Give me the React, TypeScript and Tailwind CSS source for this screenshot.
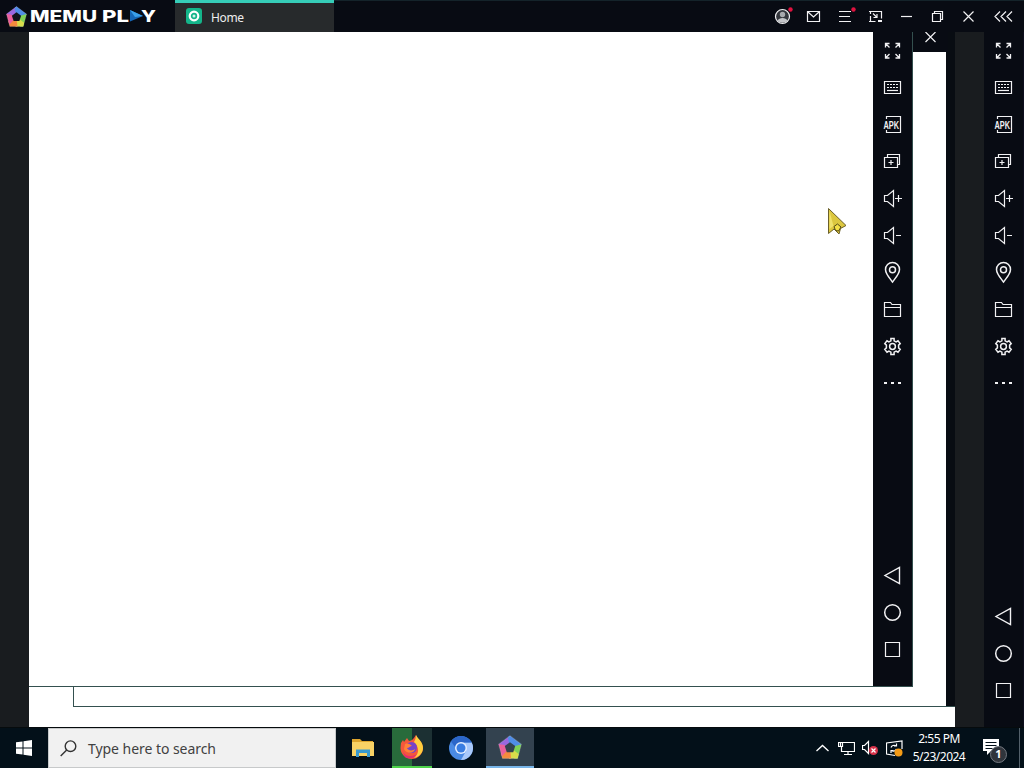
import React from "react";

type IconProps = {
  children: React.ReactNode;
  width?: number;
};

function Icon({ children, width = 1.2 }: IconProps) {
  return (
    <svg
      width="21"
      height="21"
      viewBox="0 0 21 21"
      fill="none"
      stroke="#f1f1f3"
      strokeWidth={width}
      className="shrink-0 overflow-visible"
    >
      {children}
    </svg>
  );
}

const FullscreenIcon = () => (
  <Icon width={1.3}>
    <path d="M3.5 7.5v-4h4M3.5 3.5l4 4M13.5 3.5h4v4M17.5 3.5l-4 4M3.5 14v4h4M3.5 18l4-4M17.5 14v4h-4M17.5 18l-4-4" />
  </Icon>
);

const KeyboardIcon = () => (
  <Icon>
    <path d="M2.5 4.5h16v12h-16z" />
    <path d="M5 7.5h12M5 10.5h12" strokeDasharray="2 1" />
    <path d="M5 13.5h11" />
  </Icon>
);

const ApkIcon = () => (
  <Icon>
    <path d="M4.5 5V2.5h14v16h-14V16" />
    <text
      x="1.5"
      y="14.5"
      fontSize="11"
      fontWeight="700"
      fontFamily="Liberation Sans, sans-serif"
      textLength="15.5"
      lengthAdjust="spacingAndGlyphs"
      fill="#f1f1f3"
      stroke="none"
    >
      APK
    </text>
  </Icon>
);

const MultiIcon = () => (
  <Icon>
    <path d="M2.5 6.5h13v10h-13zM5.5 6.5v-3h12v10h-2M6.5 11.5h5M9 9v5" />
  </Icon>
);

const VolumeUpIcon = () => (
  <Icon>
    <path d="M2.5 7.5h3l6-5v16l-6-5h-3zM13 10.5h7M16.5 7v7" />
  </Icon>
);

const VolumeDownIcon = () => (
  <Icon>
    <path d="M2.5 7.5h3l6-5v16l-6-5h-3zM14 10.5h5" />
  </Icon>
);

const PinIcon = () => (
  <Icon width={1.5}>
    <path d="M10.5 20C8 16.5 3.5 12 3.5 7.5a7 7 0 0 1 14 0C17.5 12 13 16.5 10.5 20z" />
    <circle cx="10.5" cy="7.7" r="3" />
  </Icon>
);

const FolderIcon = () => (
  <Icon>
    <path d="M2.5 17.5v-14h6l1.5 2h8.5v12zM2.5 8.5h16" />
  </Icon>
);

const GearIcon = () => (
  <Icon width={1.5}>
    <path d="M8.9 2.6h3.2v2.2l2 1.1 1.9-1.1 2.2 2.8-1.6 1.5v2.8l1.6 1.5-2.2 2.8-1.9-1.1-2 1.100v2.200H8.900v-2.200l-2-1.100L5 16.200l-2.200-2.800 1.600-1.500V9.100L2.800 7.600 5 4.800l1.900 1.100 2-1.100z" />
    <circle cx="10.5" cy="10.5" r="2.9" />
  </Icon>
);

const MoreIcon = () => (
  <Icon width={2}>
    <path d="M2 10h3M9 10h3M16 10h3" />
  </Icon>
);

const BackIcon = () => (
  <Icon width={1.4}>
    <path d="M17.5 2.5v16L3 10.5z" />
  </Icon>
);

const HomeIcon = () => (
  <Icon width={1.5}>
    <circle cx="10.5" cy="10.5" r="7.8" />
  </Icon>
);

const RecentIcon = () => (
  <Icon>
    <path d="M3.5 3.5h14v14h-14z" />
  </Icon>
);

const tools = [
  FullscreenIcon,
  KeyboardIcon,
  ApkIcon,
  MultiIcon,
  VolumeUpIcon,
  VolumeDownIcon,
  PinIcon,
  FolderIcon,
  GearIcon,
  MoreIcon,
];

const navigation = [BackIcon, HomeIcon, RecentIcon];

function Toolbar() {
  return (
    <aside className="flex w-[39px] shrink-0 flex-col justify-between bg-[#080b13] pb-[18px]">
      <div>
        {tools.map((Tool, i) => (
          <button key={i} className="flex h-[37px] w-full items-center justify-center">
            <Tool />
          </button>
        ))}
      </div>
      <div>
        {navigation.map((Nav, i) => (
          <button key={i} className="flex h-[37px] w-full items-center justify-center">
            <Nav />
          </button>
        ))}
      </div>
    </aside>
  );
}

function Pentagon({ size, hole }: { size: number; hole: string }) {
  return (
    <svg width={size} height={size} viewBox="0 0 24 24">
      <path d="M12 1.500L1.500 9.500 5 15l7-2.500 2-8z" fill="#9a68e0" />
      <path d="M10 3l2-1.500 10.500 8-2.500 5-8-2z" fill="#4f8de6" />
      <path d="M22.500 9.500L19 22.500h-3l-4-10z" fill="#7fd155" />
      <path d="M20 18.500l-1 4h-8l1-10z" fill="#d8dc4a" />
      <path d="M13 22.500H5L3.500 17l8.500-4.500z" fill="#f58a3e" />
      <path d="M4.500 20.500l-3-11L6 10l6 2.500z" fill="#ea5f9c" />
      <path d="M12 1.500l10.500 8L19 22.500H5L1.500 9.500z" fill="none" stroke="#fff" strokeOpacity=".15" strokeLinejoin="round" />
      <path d="M12 7.600l4.800 3.500-1.800 5.700H9l-1.800-5.700z" fill={hole} />
    </svg>
  );
}

function Brand() {
  return (
    <div className="flex w-[175px] items-center pl-[5px]">
      <Pentagon size={23} hole="#10141d" />
      <svg
        width="128"
        height="22"
        viewBox="0 0 128 22"
        className="ml-[2px]"
        fontFamily="Inter, sans-serif"
        fontSize="15.5"
        fontWeight="800"
        fill="#fff"
      >
        <text x="0" y="16.5" textLength="67" lengthAdjust="spacingAndGlyphs">
          MEMU
        </text>
        <text x="72" y="16.5" textLength="27" lengthAdjust="spacingAndGlyphs">
          PL
        </text>
        <path d="M100 5l13 6-13 5.500z" fill="#1668b8" />
        <path d="M100 5l13 6-8 1z" fill="#3aa0ea" />
        <text x="111" y="16.5" textLength="15" lengthAdjust="spacingAndGlyphs">
          Y
        </text>
      </svg>
    </div>
  );
}

function HomeTab() {
  return (
    <div className="flex w-[159px] items-start border-t-[3px] border-[#36cdb8] bg-[#272a2c] pt-[5px] pl-[11px]">
      <svg width="16" height="16" viewBox="0 0 16 16">
        <rect width="16" height="16" rx="3" fill="#14b58a" />
        <circle cx="8" cy="8" r="4.3" fill="none" stroke="#fff" strokeWidth="2.2" />
        <circle cx="8" cy="8" r="1.5" fill="#d5f5ea" />
      </svg>
      <span className="ml-[9px] text-[12px] leading-[19px] tracking-[-0.35px] text-[#eeeeee]">
        Home
      </span>
    </div>
  );
}

const windowButtons = [
  <Icon key="user">
    <circle cx="10.5" cy="10.5" r="7" fill="#34373d" />
    <circle cx="10.5" cy="8.5" r="2.7" fill="#a7a9ad" stroke="none" />
    <path d="M5.5 14.5c1.500-3.500 8.500-3.500 10 0-2 3-8 3-10 0z" fill="#c3c5c8" stroke="none" />
    <circle cx="18.5" cy="3.5" r="2.2" fill="#e0123f" stroke="none" />
  </Icon>,
  <Icon key="mail">
    <path d="M4.5 5.5h12v10h-12zM5 6l5.500 5L16 6" />
  </Icon>,
  <Icon key="menu">
    <path d="M5 5.5h12M5 10.5h11M5 15.5h12" />
    <circle cx="19.5" cy="3.5" r="2.2" fill="#e0123f" stroke="none" />
  </Icon>,
  <Icon key="pip">
    <path d="M5.5 8V5.5h11v7M5.500 10v5.500h5M4 5.500h2M4 15.500h2M8 7.500l4 4M12 8v3.500H8.500" />
    <path d="M13 15h4" strokeWidth="2" />
  </Icon>,
  <Icon key="minimize">
    <path d="M5 10.5h11" />
  </Icon>,
  <Icon key="restore">
    <path d="M5.5 7.5h8v8h-8zM7.5 7.5v-2h8v8h-2" />
  </Icon>,
  <Icon key="close">
    <path d="M5.5 5.5l10 10M15.5 5.5l-10 10" />
  </Icon>,
];

function TitleBar() {
  return (
    <header className="flex h-8 bg-[#080b13]">
      <Brand />
      <HomeTab />
      <div className="flex flex-1 justify-end border-t border-[#14232a] pr-px">
        {windowButtons.map((button, i) => (
          <button key={i} className="flex w-[31px] items-center justify-center">
            {button}
          </button>
        ))}
        <button className="flex w-[39px] items-center justify-center">
          <Icon>
            <path d="M7 5.5l-5 5 5 5M13 5.5l-5 5 5 5M19 5.5l-5 5 5 5" />
          </Icon>
        </button>
      </div>
    </header>
  );
}

function Workspace() {
  return (
    <main className="flex h-[695px] bg-[#191c1f]">
      <section className="relative ml-[29px] w-[926px] overflow-hidden bg-white">
        {/* rear window */}
        <div className="absolute top-0 left-[44px] flex h-[675px] w-[882px] border-b border-l border-[#34504f] bg-white">
          <div className="ml-auto w-[42px] bg-[#080c12]">
            <div className="flex h-5 w-[35px] items-start justify-center bg-[#080b13]">
              <svg width="11" height="11" viewBox="0 0 11 11" stroke="#f1f1f3" strokeWidth="1.2">
                <path d="M.5 0l10 10M10.5 0l-10 10" />
              </svg>
            </div>
            <div className="h-[654px] w-[33px] bg-white" />
          </div>
        </div>
        {/* front window */}
        <div className="absolute top-0 left-0 flex h-[655px] w-[884px] border-r border-b border-[#34504f] bg-white">
          <div className="flex-1" />
          <Toolbar />
        </div>
        <svg
          width="22"
          height="30"
          viewBox="0 0 22 30"
          className="absolute top-[175px] left-[798px]"
        >
          <path d="M1.5 1.5v25l5.500-4.500 5 5 1.500-5.500 5.500-3z" fill="#dcc73f" stroke="#6b602a" />
          <path d="M2.5 4v18l4-3z" fill="#f0e16b" />
          <path d="M7 19.5l3.500-2.500 3.500 3-2.500 4-3-.5z" fill="#f4df46" stroke="#514917" />
        </svg>
      </section>
      <div className="ml-[29px] flex border-r border-[#0d0d1d]">
        <Toolbar />
      </div>
    </main>
  );
}

function Taskbar() {
  return (
    <footer className="flex h-[41px] border-t border-[#060b0d] bg-[#031019] text-white">
      <button className="flex w-12 items-center justify-center">
        <svg width="16" height="16" viewBox="0 0 16 16" fill="#fff">
          <path d="M0 2.3L6.5 1.4v6.1H0zM7.5 1.2L16 0v7.5H7.5zM0 8.5h6.5v6.1L0 13.7zM7.5 8.5H16V16l-8.5-1.2z" />
        </svg>
      </button>
      <div className="flex w-[288px] items-center border border-[#c7c9ca] bg-[#f1f1f1] pl-[11px]">
        <svg width="17" height="17" viewBox="0 0 17 17" fill="none" stroke="#333" strokeWidth="1.4">
          <circle cx="10.5" cy="6.2" r="5.3" />
          <path d="M6.7 10L.7 16" />
        </svg>
        <span className="ml-[11px] text-[14px] tracking-[-0.05px] text-[#414141]">
          Type here to search
        </span>
      </div>

      <div className="flex pl-[3px]">
        <button className="flex w-12 items-center justify-center">
          <svg width="22" height="20" viewBox="0 0 22 20">
            <path d="M0 1h8l2 2h11v15H0z" fill="#dda52d" />
            <path d="M0 4h22v14H0z" fill="#f8d265" />
            <path d="M4 19v-7.5h14V19h-3v-4H7v4z" fill="#3899cf" />
          </svg>
        </button>
        <button className="ml-[5px] flex w-10 items-center justify-center border-b-2 border-[#4ed34b] bg-linear-to-r from-[#286b3b] from-50% to-[#1c3033] to-50%">
          <svg width="24" height="24" viewBox="0 0 24 24">
            <path d="M1 8l2-3 1 2 3-4 2 3c3 0 5-3 7-6 1 4 7 7 7 13 0 6-5 11-11 11S.5 19.5.5 13z" fill="#f4573c" />
            <path d="M14 7c1-2 2-4 2-7 2 4 7 7 7 13 0 5-4 9-9 10 6-5 5-11 0-16z" fill="#ffce3e" />
            <path d="M2 15c2 6 9 8 15 4-2 4-8 6-12 3z" fill="#e32f70" />
            <circle cx="11.5" cy="12.5" r="5.5" fill="#7643c7" />
            <path d="M5 9c3-1 5 0 7 2-2 0-3 2-5 2 1 3 6 3 8 1-1 5-9 5-11 0z" fill="#ff8138" />
          </svg>
        </button>
        <button className="ml-[5px] flex w-12 items-center justify-center">
          <svg width="24" height="24" viewBox="0 0 24 24">
            <circle cx="12" cy="12" r="12" fill="#4a8ae4" />
            <path d="M12 6.5h10.7A12 12 0 0 1 12 24l5-9z" fill="#a9c9fb" />
            <path d="M2 5.5A12 12 0 0 1 22.7 6.500H12a6 6 0 0 0-5.500 5z" fill="#2b66c9" />
            <circle cx="12" cy="12" r="6" fill="#e3edff" />
            <circle cx="12" cy="12" r="4.5" fill="#397de2" />
          </svg>
        </button>
        <button className="ml-[1px] flex w-12 items-center justify-center border-b-2 border-[#78b5e8] bg-[#33424f]">
          <Pentagon size={26} hole="#33424f" />
        </button>
      </div>

      <div className="ml-auto flex items-center">
        <svg width="13" height="8" viewBox="0 0 13 8" fill="none" stroke="#fff" strokeWidth="1.3">
          <path d="M.5 7l6-5.500 6 5.500" />
        </svg>
        <svg width="17" height="16" viewBox="0 0 17 16" fill="none" stroke="#fff" strokeWidth="1.2" className="ml-[9px]">
          <path d="M5 2.5h11.500v9H3.500v-5M10 11.500v3M6 14.500h8M.5 2.500h4v4h-4zM2.500 2v4" />
        </svg>
        <svg width="17" height="16" viewBox="0 0 17 16" fill="none" stroke="#fff" strokeWidth="1.2" className="ml-[7px]">
          <path d="M.5 5.5h2l4-4v12l-4-4h-2z" />
          <circle cx="11.5" cy="10.5" r="4.5" fill="#d8324a" stroke="none" />
          <path d="M9.5 8.5l4 4M13.5 8.5l-4 4" />
        </svg>
        <svg width="18" height="17" viewBox="0 0 18 17" fill="none" stroke="#fff" strokeWidth="1.2" className="ml-[7px]">
          <path d="M9 15.5l-8.500-1.500V3l15.500-2v8M5 7.500a3.300 3.300 0 0 1 5-1.500M10.500 3.500V6H8M10.500 9a3.300 3.300 0 0 1-5 1.500M5 13v-2.500h2.500" />
          <circle cx="12.5" cy="12.5" r="4" fill="#f59b16" stroke="none" />
        </svg>
        <div className="ml-[7px] w-[56px] text-center text-[12px] leading-[18px] tracking-[-0.5px] whitespace-nowrap">
          <div>2:55 PM</div>
          <div>5/23/2024</div>
        </div>
        <div className="relative ml-[16px] h-5 w-[36px]">
          <svg width="17" height="18" viewBox="0 0 17 18">
            <path d="M0 1h16v12H8l-4 4v-4H0z" fill="#fff" />
            <path d="M2.5 4.5h11M2.5 7.5h11M2.5 10.5h7" stroke="#031019" />
          </svg>
          <span className="absolute top-[8px] left-[7px] flex h-[17px] w-[17px] items-center justify-center rounded-full border border-[#747981] bg-[#30353c] text-[11px] font-bold">
            1
          </span>
        </div>
        <div className="h-full w-[5px] border-l border-[#53606a]" />
      </div>
    </footer>
  );
}

function App() {
  return (
    <div className="h-[768px] w-[1024px] overflow-hidden font-['Noto_Sans','Open_Sans',sans-serif]">
      <TitleBar />
      <Workspace />
      <Taskbar />
    </div>
  );
}

export default App;
